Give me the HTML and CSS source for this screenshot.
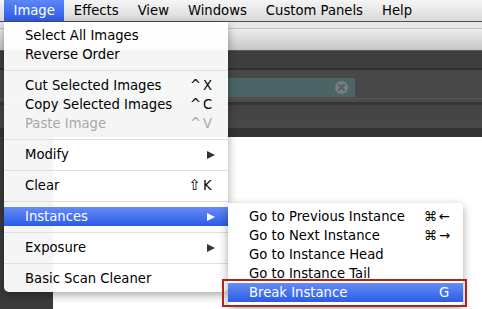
FILE: index.html
```html
<!DOCTYPE html>
<html lang="en">
<head>
    <meta charset="UTF-8">
    <title>Image menu</title>
    <link rel="stylesheet" href="styles.css">
</head>
<body>
    <div class="menubar">
        <span class="mb-item active">Image</span>
        <span class="mb-item">Effects</span>
        <span class="mb-item">View</span>
        <span class="mb-item">Windows</span>
        <span class="mb-item">Custom Panels</span>
        <span class="mb-item">Help</span>
    </div>

    <div class="window">
        <div class="titlebar"></div>
        <div class="toolbar"></div>
        <div class="panel-head"></div>
        <div class="filter-row">
            <div class="search">
                <svg class="clear-btn" width="13" height="13" viewBox="0 0 13 13">
                    <circle cx="6.5" cy="6.5" r="6.5" fill="#7c7c7c"/>
                    <path d="M4 4 L9 9 M9 4 L4 9" stroke="#4d6465" stroke-width="2" stroke-linecap="round"/>
                </svg>
            </div>
        </div>
        <div class="rule"></div>
        <div class="strip"></div>
        <div class="strip-foot"></div>
        <div class="workspace">
            <div class="sidebar"></div>
            <div class="canvas"></div>
        </div>
    </div>

    <!-- Image menu -->
    <div class="menu main-menu">
        <div class="item"><span class="label">Select All Images</span></div>
        <div class="item"><span class="label">Reverse Order</span></div>
        <div class="sep"></div>
        <div class="item"><span class="label">Cut Selected Images</span><span class="shortcut"><span class="mod">^</span><span class="key">X</span></span></div>
        <div class="item"><span class="label">Copy Selected Images</span><span class="shortcut"><span class="mod">^</span><span class="key">C</span></span></div>
        <div class="item disabled"><span class="label">Paste Image</span><span class="shortcut"><span class="mod">^</span><span class="key">V</span></span></div>
        <div class="sep"></div>
        <div class="item"><span class="label">Modify</span><span class="arrow"></span></div>
        <div class="sep"></div>
        <div class="item"><span class="label">Clear</span><span class="shortcut"><span class="mod shift">⇧</span><span class="key">K</span></span></div>
        <div class="sep"></div>
        <div class="item selected"><span class="label">Instances</span><span class="arrow"></span></div>
        <div class="sep"></div>
        <div class="item"><span class="label">Exposure</span><span class="arrow"></span></div>
        <div class="sep"></div>
        <div class="item"><span class="label">Basic Scan Cleaner</span></div>
    </div>

    <!-- Instances submenu -->
    <div class="menu sub-menu">
        <div class="item"><span class="label">Go to Previous Instance</span><span class="shortcut"><span class="mod">⌘</span><span class="key">←</span></span></div>
        <div class="item"><span class="label">Go to Next Instance</span><span class="shortcut"><span class="mod">⌘</span><span class="key">→</span></span></div>
        <div class="item"><span class="label">Go to Instance Head</span></div>
        <div class="item"><span class="label">Go to Instance Tail</span></div>
        <div class="item selected"><span class="label">Break Instance</span><span class="shortcut"><span class="key">G</span></span></div>
    </div>

    <div class="callout"></div>
</body>
</html>
```

FILE: styles.css
```css
body {
    margin: 0;
    width: 482px;
    height: 309px;
    overflow: hidden;
    font-family: "DejaVu Sans", sans-serif;
    font-size: 13.2px;
    color: #000;
    background: #fff;
    position: relative;
}

/* menu bar */
.menubar {
    display: flex;
    height: 21px;
    padding-left: 4px;
    background: linear-gradient(#f5f5f5, #d9d9d9);
    border-bottom: 1px solid #4c4c4c;
}
.mb-item {
    padding: 0 9.5px;
    line-height: 21px;
}
.mb-item.active {
    color: #fff;
    background: linear-gradient(#5d86f6, #2c5ce9);
}

/* app window behind the menus */
.titlebar {
    height: 6px;
    background: #e7e7e7;
    border-bottom: 1px solid #c2c2c2;
}
.toolbar {
    height: 21px;
    background: linear-gradient(#ededed, #c6c6c6);
    border-bottom: 1px solid #5a5a5a;
}
.panel-head {
    height: 17px;
    background: #3e3e3e;
    border-bottom: 2px solid #323232;
}
.filter-row {
    height: 28px;
    background: #474747;
    display: flex;
    align-items: flex-start;
    padding-top: 8px;
    box-sizing: border-box;
}
.search {
    margin-left: 40px;
    width: 315px;
    height: 19px;
    background: #4c6465;
    display: flex;
    align-items: center;
    justify-content: flex-end;
    padding-right: 7px;
    box-sizing: border-box;
}
.rule {
    height: 3px;
    background: #4b4b4b;
    border-top: 1px solid #585858;
}
.strip {
    height: 3px;
    background: #363636;
}
.strip-foot {
    height: 23px;
    background: linear-gradient(#424242, #484848);
}
.strip-foot + .workspace {
    border-top: 9px solid #343434;
}
.workspace {
    display: flex;
    height: 180px;
}
.sidebar {
    width: 53px;
    background: #3a3a3a;
}
.canvas {
    flex: 1;
    background: #fff;
}

/* dropdown menus */
.menu {
    position: absolute;
    background: rgba(255, 255, 255, 0.95);
    padding: 4px 0;
    box-shadow: 0 3px 10px rgba(0, 0, 0, 0.35);
}
.main-menu {
    left: 4px;
    top: 22px;
    width: 224px;
    border-radius: 0 0 5px 5px;
}
.sub-menu {
    left: 228px;
    top: 203px;
    width: 235px;
    border-radius: 0 5px 5px 5px;
}
.item {
    display: flex;
    align-items: center;
    height: 19px;
    padding: 0 14px 0 21px;
}
.sub-menu .item {
    padding-right: 10px;
}
.label {
    flex: 1;
    white-space: nowrap;
}
.shortcut {
    display: flex;
}
.mod {
    margin-right: 2px;
}
.mod.shift {
    font-size: 15px;
    line-height: 15px;
}
.key {
    width: 11px;
}
.sub-menu .key {
    width: 14px;
}
.arrow {
    width: 0;
    height: 0;
    margin-right: -1px;
    border-left: 8px solid #333;
    border-top: 4.5px solid transparent;
    border-bottom: 4.5px solid transparent;
}
.sep {
    height: 1px;
    margin: 6px 0 5px;
    background: #dedede;
}
.item.disabled {
    color: #a8a8a8;
}
.item.selected {
    color: #fff;
    background: linear-gradient(#658bf5, #2a5ce9);
}
.item.selected .arrow {
    border-left-color: #fff;
}

/* red highlight box around Break Instance */
.callout {
    position: absolute;
    left: 222px;
    top: 279px;
    width: 245px;
    height: 28px;
    box-sizing: border-box;
    border: 2px solid #b0231d;
}
```
